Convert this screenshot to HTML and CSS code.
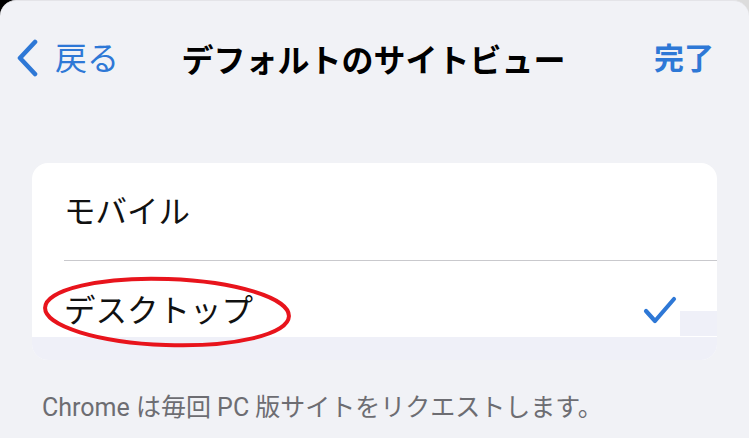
FILE: index.html
```
<!DOCTYPE html>
<html lang="ja">
<head>
    <meta charset="UTF-8">
    <meta name="viewport" content="width=device-width, initial-scale=1.0">
    <title>デフォルトのサイトビュー</title>
    <link rel="stylesheet" href="styles.css">
</head>
<body>
    <div class="screen">
        <div class="navbar">
            <a class="nav-back" href="#">
                <svg class="chevron" width="26" height="38" viewBox="0 0 26 38">
                    <path d="M20 3 L5 19 L20 35" fill="none" stroke="#2e78d6" stroke-width="4.6" stroke-linecap="round" stroke-linejoin="round"/>
                </svg>
                <span>戻る</span>
            </a>
            <div class="nav-title">デフォルトのサイトビュー</div>
            <a class="nav-done" href="#">完了</a>
        </div>

        <div class="card">
            <div class="row">
                <span class="row-label">モバイル</span>
            </div>
            <div class="divider"></div>
            <div class="row row-selected">
                <span class="row-label">デスクトップ</span>
                <svg class="check" width="36" height="30" viewBox="0 0 36 30">
                    <path d="M4 16 L13 26 L32 4" fill="none" stroke="#2e78d6" stroke-width="4.2" stroke-linecap="round" stroke-linejoin="round"/>
                </svg>
                <!-- hand drawn mark around the option -->
                <svg class="circle-mark" width="256" height="76" viewBox="0 0 256 76">
                    <ellipse cx="128" cy="38" rx="122" ry="33" transform="rotate(2 128 38)" fill="none" stroke="#e8141c" stroke-width="4"/>
                </svg>
            </div>
        </div>

        <p class="footnote">Chrome は毎回 PC 版サイトをリクエストします。</p>
    </div>
</body>
</html>
```

FILE: styles.css
```
html, body {
    margin: 0;
    padding: 0;
}

body {
    width: 749px;
    height: 438px;
    overflow: hidden;
    background: linear-gradient(to right, #000 0%, #000 50%, #dcdcdc 50%, #dcdcdc 100%);
    font-family: Roboto, "Noto Sans CJK JP", sans-serif;
}

.screen {
    height: 438px;
    background: #f1f2f6;
    border-radius: 16px 16px 0 0;
    border-top: 1px solid #e4e4e8;
    box-sizing: border-box;
}

.navbar {
    height: 113px;
    display: flex;
    align-items: center;
    justify-content: space-between;
    padding: 0 35px 0 15px;
    position: relative;
}

.nav-back {
    display: flex;
    align-items: center;
    gap: 14px;
    color: #2e78d6;
    text-decoration: none;
    font-size: 32px;
    font-family: "Noto Sans CJK JP", sans-serif;
}

.nav-back span {
    margin-top: -3px;
}

.nav-title {
    position: absolute;
    left: 0;
    right: 0;
    text-align: center;
    font-size: 32px;
    font-weight: bold;
    color: #000;
    font-family: "Noto Sans CJK JP", sans-serif;
    pointer-events: none;
    margin-left: -2px;
}

.nav-done {
    color: #2e78d6;
    text-decoration: none;
    font-size: 30px;
    font-weight: bold;
    font-family: "Noto Sans CJK JP", sans-serif;
    margin-top: -3px;
}

.card {
    margin: 49px 32px 0 32px;
    background: #fff;
    border-radius: 16px;
    overflow: hidden;
}

.row {
    height: 97px;
    display: flex;
    align-items: center;
    justify-content: space-between;
    padding: 0 39px 0 32px;
    position: relative;
}

.divider {
    height: 1px;
    margin-left: 32px;
    background: #c9c9cd;
}

.row-selected {
    height: 99px;
    background:
        linear-gradient(#eff0f8, #eff0f8) right 0 top 50px / 37px 25px no-repeat,
        linear-gradient(to bottom, #fff 76px, #eff0f8 76px);
}

.row-label {
    font-size: 31.5px;
    color: #111;
    font-family: "Noto Sans CJK JP", sans-serif;
    margin-top: -5px;
}

.check {
    margin-top: -2px;
}

.circle-mark {
    position: absolute;
    left: 7px;
    top: 13px;
}

.footnote {
    margin: 33px 0 0 42px;
    font-size: 25px;
    line-height: 30px;
    color: #6d6d72;
}
```
